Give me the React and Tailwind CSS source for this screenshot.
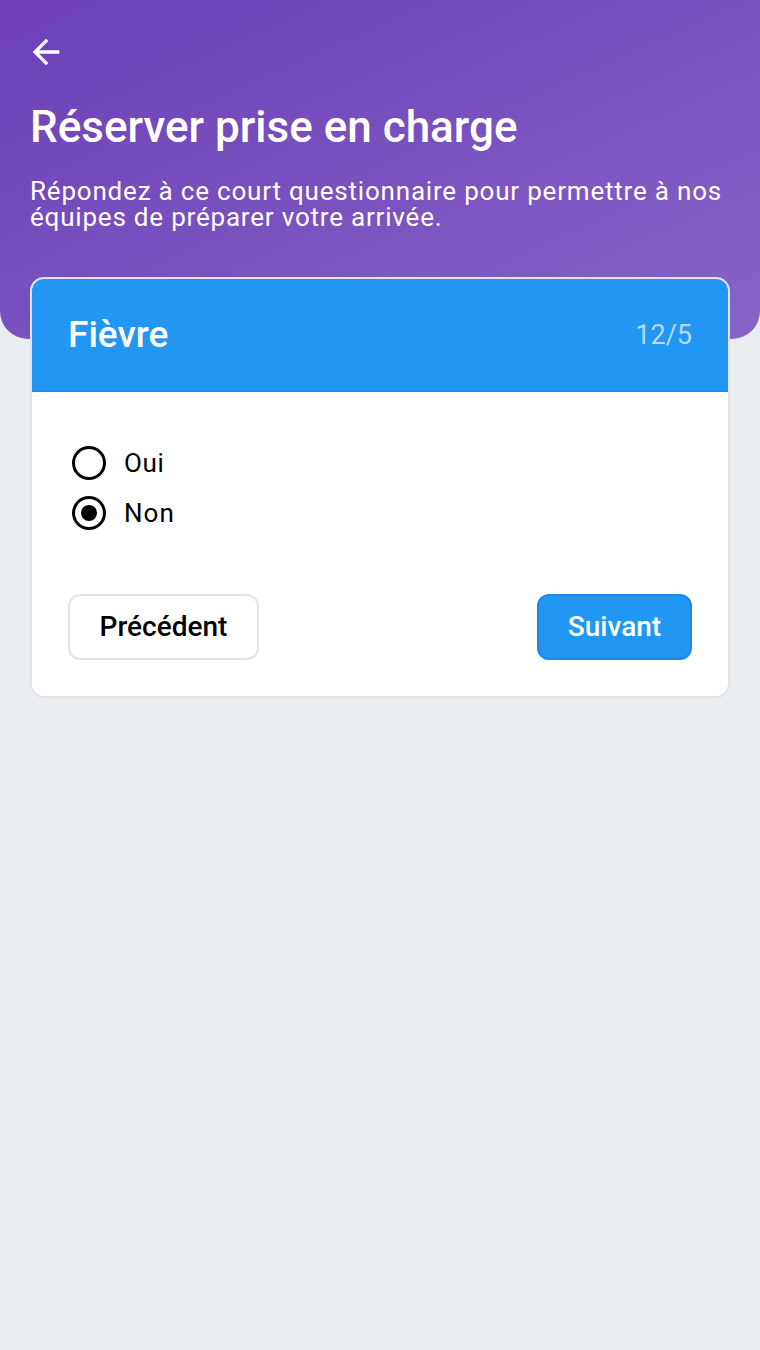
export default function App() {
  return (
    <div className="min-h-[1350px] w-full bg-[#eaedf0] leading-none" style={{ fontFamily: "Roboto, 'Noto Sans', sans-serif" }}>
      <div className="h-[339px] rounded-b-[28px] bg-gradient-to-br from-[#6c3fb6] to-[#8763c8] px-[30px] pt-[32px]">
        <svg width="40" height="40" viewBox="0 0 24 24" className="-ml-[4px] block" fill="white">
          <path d="M20 11H7.83l5.59-5.59L12 4l-8 8 8 8 1.41-1.41L7.83 13H20v-2z" />
        </svg>
        <h1 className="mt-[29px] text-[44px] font-medium leading-[52px] text-white">Réserver prise en charge</h1>
        <p className="mt-[25px] text-[26px] leading-[26px] tracking-[0.8px] text-white">
          Répondez à ce court questionnaire pour permettre à nos équipes de préparer votre arrivée.
        </p>
      </div>
      <div className="relative mx-[30px] -mt-[62px] overflow-hidden rounded-[14px] border-2 border-[#e3e3e6] bg-white">
        <div className="flex h-[112px] items-center justify-between bg-[#2196f3] pl-[36px] pr-[36px]">
          <span className="text-[37px] font-medium leading-[44px] text-white">Fièvre</span>
          <span className="text-[27px] leading-[32px] text-[#b5dbfb]">12/5</span>
        </div>
        <div className="border-t border-[#1e88e5] px-[36px] pb-[36px] pt-[54px]">
          <div className="flex flex-col gap-[16px] pl-[4px]">
            <label className="flex h-[34px] items-center gap-[18px]">
              <span className="block h-[34px] w-[34px] rounded-full border-[3px] border-black"></span>
              <span className="text-[26px] leading-[30px] tracking-[0.6px] text-black">Oui</span>
            </label>
            <label className="flex h-[34px] items-center gap-[18px]">
              <span className="flex h-[34px] w-[34px] items-center justify-center rounded-full border-[3px] border-black">
                <span className="block h-[16px] w-[16px] rounded-full bg-black"></span>
              </span>
              <span className="text-[26px] leading-[30px] tracking-[1px] text-black">Non</span>
            </label>
          </div>
          <div className="mt-[64px] flex items-center justify-between">
            <button className="h-[66px] w-[191px] rounded-[12px] border-2 border-[#e4e4e4] bg-white text-[28px] font-medium leading-[32px] text-black">
              Précédent
            </button>
            <button className="h-[66px] w-[155px] rounded-[12px] border-2 border-[#1e88e5] bg-[#2196f3] text-[28px] font-medium leading-[32px] text-white">
              Suivant
            </button>
          </div>
        </div>
      </div>
    </div>
  );
}
